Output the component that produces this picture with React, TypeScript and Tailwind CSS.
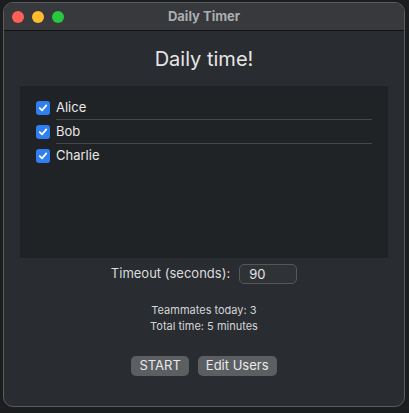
import React, { useState } from "react";

const users = ["Alice", "Bob", "Charlie"];

const Check: React.FC<{ checked: boolean; onClick: () => void }> = ({ checked, onClick }) => (
  <button
    onClick={onClick}
    className={`w-[14px] h-[14px] rounded-[3px] flex items-center justify-center ${
      checked ? "bg-[#2f7ff0]" : "bg-[#3a3d40] border border-[#55585b]"
    }`}
  >
    {checked && (
      <svg width="10" height="10" viewBox="0 0 10 10">
        <path d="M1.8 5.2 L4 7.4 L8.3 2.4" fill="none" stroke="#fff" strokeWidth="1.8" strokeLinecap="round" strokeLinejoin="round" />
      </svg>
    )}
  </button>
);

export default function App() {
  const [checked, setChecked] = useState<boolean[]>([true, true, true]);
  const [timeout, setTimeoutVal] = useState("90");

  const count = checked.filter(Boolean).length;
  const minutes = Math.ceil((count * Number(timeout || 0)) / 60);

  return (
    <div
      className="w-[409px] h-[413px] bg-[#1c1d1f] pt-[2px] pl-[3px] pr-[4px] pb-[6px]"
      style={{ fontFamily: "Inter, 'Noto Sans', sans-serif" }}
    >
      <div className="h-full rounded-[10px] border border-[#5a5d60] bg-[#292c30] overflow-hidden flex flex-col">
        {/* title bar */}
        <div className="h-[28px] bg-[#37393c] border-b border-[#121315] flex items-center relative">
          <div className="flex gap-[8px] pl-[8px]">
            <span className="w-[12px] h-[12px] rounded-full bg-[#fe5f57]" />
            <span className="w-[12px] h-[12px] rounded-full bg-[#febc2e]" />
            <span className="w-[12px] h-[12px] rounded-full bg-[#28c840]" />
          </div>
          <div className="absolute inset-0 flex items-center justify-center text-[13px] font-bold text-[#abadaf]">
            Daily Timer
          </div>
        </div>

        {/* body */}
        <div className="flex flex-col items-center px-[16px]">
          <h1 className="mt-[15px] text-[20px] text-[#e6e6e7] leading-[26px]">Daily time!</h1>

          <div className="mt-[14px] w-full h-[172px] bg-[#202326] pt-[10px] pl-[16px] pr-[16px]">
            {users.map((u, i) => (
              <div key={u} className="flex items-center gap-[6px] h-[24px]">
                <Check
                  checked={checked[i]}
                  onClick={() => setChecked((c) => c.map((v, j) => (j === i ? !v : v)))}
                />
                <div
                  className={`flex-1 h-full flex items-center text-[13px] text-[#e8e8e9] ${
                    i < users.length - 1 ? "border-b border-[#45484b]" : ""
                  }`}
                >
                  {u}
                </div>
              </div>
            ))}
          </div>

          <div className="mt-[6px] flex items-center gap-[9px] text-[13px] text-[#dcdcdd]">
            <span>Timeout (seconds):</span>
            <input
              value={timeout}
              onChange={(e) => setTimeoutVal(e.target.value)}
              className="w-[58px] h-[20px] rounded-[5px] border border-[#55585b] bg-[#303336] px-[9px] text-[13px] text-[#e4e4e5] outline-none"
            />
          </div>

          <div className="mt-[18px] text-[11px] leading-[16px] text-[#d6d6d7] text-center">
            <div>Teammates today: {count}</div>
            <div>Total time: {minutes} minutes</div>
          </div>

          <div className="mt-[22px] flex gap-[9px]">
            <button className="h-[20px] px-[8px] rounded-[5px] bg-[#5c5f62] text-[13px] text-[#e8e8e9]">START</button>
            <button className="h-[20px] px-[8px] rounded-[5px] bg-[#5c5f62] text-[13px] text-[#e8e8e9]">Edit Users</button>
          </div>
        </div>
      </div>
    </div>
  );
}
